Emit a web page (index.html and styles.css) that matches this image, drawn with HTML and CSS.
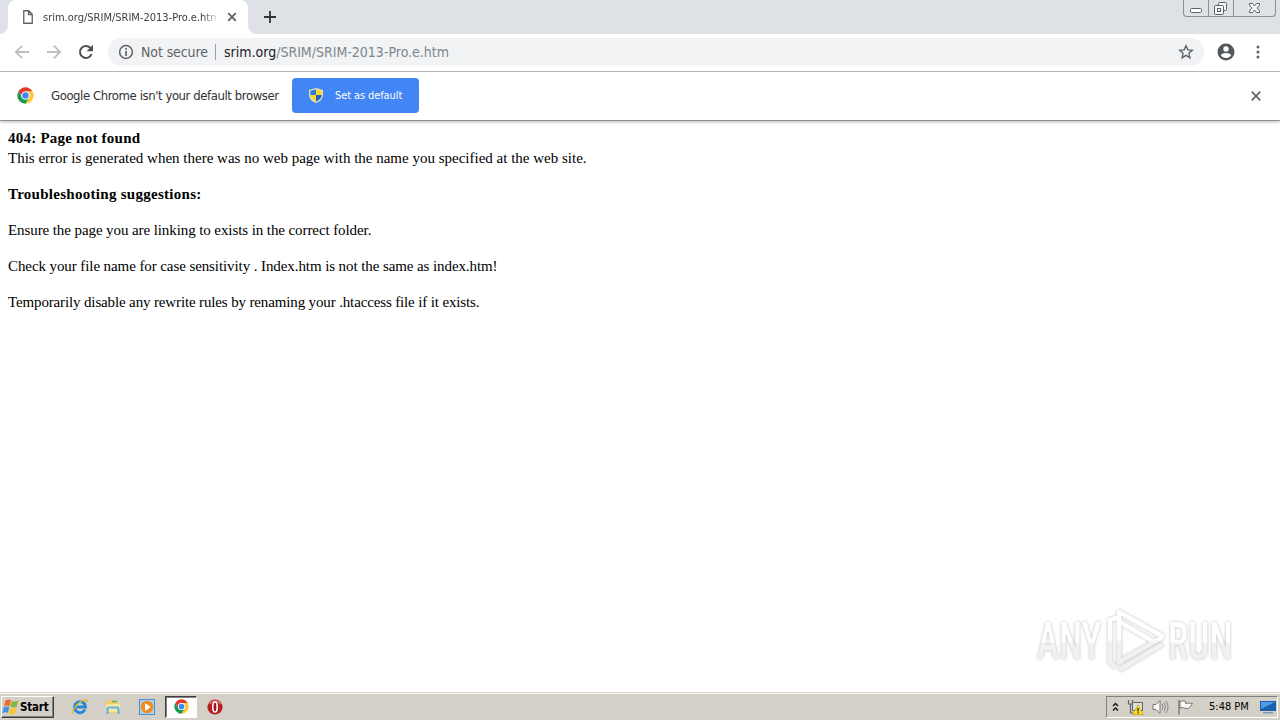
FILE: index.html
```
<!DOCTYPE html>
<html lang="en">
<head>
    <meta charset="UTF-8">
    <meta name="viewport" content="width=device-width, initial-scale=1.0">
    <title>srim.org/SRIM/SRIM-2013-Pro.e.htm</title>
    <link rel="stylesheet" href="styles.css">
</head>
<body>

    <!-- Shared Chrome logo -->
    <svg width="0" height="0" class="defs">
        <symbol id="chrome-logo" viewBox="0 0 48 48">
            <circle cx="24" cy="24" r="23" fill="#fff"/>
            <path d="M4.1 12.5A23 23 0 0 1 43.9 12.5H24A11.5 11.5 0 0 0 14 29.7z" fill="#e33b2e"/>
            <path d="M43.9 12.5A23 23 0 0 1 24 47L34 29.7A11.5 11.5 0 0 0 24 12.5z" fill="#fcc934"/>
            <path d="M24 47A23 23 0 0 1 4.1 12.5L14 29.7A11.5 11.5 0 0 0 34 29.7z" fill="#149a50"/>
            <circle cx="24" cy="24" r="11.5" fill="#fff"/>
            <circle cx="24" cy="24" r="9" fill="#4285f4"/>
        </symbol>
    </svg>

    <div class="screen">
        <!-- Tab strip -->
        <div class="tab-strip">
            <div class="tab">
                <svg class="page-icon" width="10" height="14" viewBox="0 0 10 14"><path d="M.75.75h5l3.5 3.5v9H.75zM5.5.75V4.5h3.75" fill="none" stroke="#5f6368" stroke-width="1.3"/></svg>
                <span class="tab-title">srim.org/SRIM/SRIM-2013-Pro.e.htm</span>
                <svg class="tab-close" width="10" height="10" viewBox="0 0 10 10"><path d="M1.2 1.2l7.6 7.6M8.8 1.2L1.2 8.8" stroke="#5f6368" stroke-width="1.8"/></svg>
            </div>
            <svg class="new-tab" width="12" height="12" viewBox="0 0 12 12"><path d="M6 0v12M0 6h12" stroke="#30343a" stroke-width="1.8"/></svg>
            <div class="window-controls">
                <div class="control">
                    <svg width="24" height="16" viewBox="0 0 24 16"><rect x="6.5" y="8.5" width="11" height="4" rx="1" fill="#fff" stroke="#5c626c"/></svg>
                </div>
                <div class="control">
                    <svg width="24" height="16" viewBox="0 0 24 16"><g fill="#f4f5f7" stroke="#5c626c"><rect x="9.5" y="2.5" width="8" height="8" rx="1"/><rect x="5.5" y="5.5" width="9" height="9" rx="1"/><rect x="8.5" y="8.5" width="3" height="3"/></g></svg>
                </div>
                <div class="control">
                    <svg width="41" height="16" viewBox="0 0 41 16"><path d="M15.5 3.5h3l2 2.5 2-2.5h3v1.5l-2.6 3 2.6 3v1.5h-3l-2-2.5-2 2.5h-3V11l2.6-3-2.6-3z" fill="#fff" stroke="#5c626c"/></svg>
                </div>
            </div>
        </div>

        <!-- Toolbar -->
        <div class="toolbar">
            <div class="nav-buttons">
                <svg width="16" height="16" viewBox="0 0 16 16"><path d="M15 8H2M8.2 1.6L1.8 8l6.4 6.4" fill="none" stroke="#bdc0c3" stroke-width="1.8"/></svg>
                <svg width="16" height="16" viewBox="0 0 16 16"><path d="M1 8h13M7.8 1.6L14.2 8l-6.4 6.4" fill="none" stroke="#bdc0c3" stroke-width="1.8"/></svg>
                <svg width="16" height="16" viewBox="0 0 16 16"><path d="M13.6 10A6 6 0 1 1 12.3 3.8l1.2 1.2" fill="none" stroke="#4d5156" stroke-width="2"/><path d="M15 .8v6.4H8.6z" fill="#4d5156"/></svg>
            </div>
            <div class="omnibox">
                <svg width="16" height="16" viewBox="0 0 16 16"><circle cx="8" cy="8" r="6.4" fill="none" stroke="#5f6368" stroke-width="1.5"/><path d="M7.2 4h1.7v1.7H7.2zM7.2 7h1.7v5H7.2z" fill="#5f6368"/></svg>
                <span class="security">Not secure</span>
                <span class="divider"></span>
                <span class="url"><b>srim.org</b>/SRIM/SRIM-2013-Pro.e.htm</span>
                <svg class="star" width="16" height="16" viewBox="0 0 16 16"><path d="M8 1.7l1.8 4.2 4.5.4-3.4 3 1 4.4L8 11.4l-3.9 2.3 1-4.4-3.4-3 4.5-.4z" fill="none" stroke="#5f6368" stroke-width="1.4"/></svg>
            </div>
            <svg class="profile" width="18" height="18" viewBox="0 0 18 18"><circle cx="9" cy="9" r="8.5" fill="#54585d"/><circle cx="9" cy="6" r="2.7" fill="#fff"/><path d="M3.8 12.3c.9-1.7 3-2.4 5.2-2.4s4.3.7 5.2 2.4C13 14 11.2 15 9 15s-4-1-5.2-2.7z" fill="#fff"/></svg>
            <svg class="menu" width="4" height="14" viewBox="0 0 4 14"><g fill="#5f6368"><circle cx="2" cy="2" r="1.5"/><circle cx="2" cy="7" r="1.5"/><circle cx="2" cy="12" r="1.5"/></g></svg>
        </div>

        <!-- Default browser bar -->
        <div class="infobar">
            <svg width="17" height="17"><use href="#chrome-logo"/></svg>
            <span class="infobar-text">Google Chrome isn't your default browser</span>
            <button class="default-button">
                <svg width="14" height="15" viewBox="0 0 14 15"><path d="M7 0L0 2v5q0 5 7 8 7-3 7-8V2z" fill="#e6e2c5"/><path d="M7 1.3L1.3 2.9V7H7z" fill="#2e7bd1"/><path d="M7 1.3l5.7 1.6V7H7z" fill="#ffd52e"/><path d="M1.3 7H7v6.7Q1.4 11 1.3 7z" fill="#ffd52e"/><path d="M12.7 7H7v6.7q5.6-2.7 5.7-6.7z" fill="#2168bd"/></svg>
                <span>Set as default</span>
            </button>
            <svg class="infobar-close" width="10" height="10" viewBox="0 0 10 10"><path d="M.7.7l8.6 8.6M9.3.7L.7 9.3" stroke="#5f6368" stroke-width="1.7"/></svg>
        </div>

        <!-- Page -->
        <div class="page">
            <h1>404: Page not found</h1>
            <p class="lead">This error is generated when there was no web page with the name you specified at the web site.</p>
            <p class="subtitle">Troubleshooting suggestions:</p>
            <p>Ensure the page you are linking to exists in the correct folder.</p>
            <p>Check your file name for case sensitivity . Index.htm is not the same as index.htm!</p>
            <p class="last">Temporarily disable any rewrite rules by renaming your .htaccess file if it exists.</p>
        </div>

        <!-- Taskbar -->
        <div class="taskbar">
            <div class="start">
                <svg width="18" height="17" viewBox="1.5 0 14 15"><path d="M3.5 2.5q2.5-2 5-.5L7.3 7.2q-2.5-1.4-5 .3z" fill="#ef6a2d"/><path d="M9.3 2.4q2.6 1.6 5.7-.2l-1.5 5.2q-2.8 1.7-5.4.2z" fill="#7dbb3b"/><path d="M2 8.4q2.6-1.7 5-.3l-1.3 5q-2.4-1.4-5 .3z" fill="#3d94df"/><path d="M7.9 8.5q2.6 1.5 5.4-.1L12 13.6q-2.9 1.6-5.5 0z" fill="#fcc631"/></svg>
                <span>Start</span>
            </div>
            <div class="launcher">
                <svg width="18" height="18" viewBox="0 0 18 18"><path d="M14 11.5A5.5 5.5 0 1 1 14.5 9H5" fill="none" stroke="#2188d8" stroke-width="2.9"/><path d="M2.2 15.9C-.5 14.5 4.5 7 9.5 3.8c4-2.7 7.2-3 6.5.5" fill="none" stroke="#e7b936" stroke-width="1.4"/></svg>
            </div>
            <div class="launcher explorer">
                <svg width="18" height="18" viewBox="0 0 18 18"><path d="M2 3l5-1 2 2h6v11H2z" fill="#efcd67"/><path d="M2 6h14v8H2z" fill="#f8e69b"/><path d="M3.5 16v-5q0-1.5 1.5-1.5h8q1.500 0 1.500 1.500v5" fill="none" stroke="#60b6e4" stroke-width="2.2"/><path d="M8 3.5h5" stroke="#5cae58" stroke-width="1.5"/></svg>
            </div>
            <div class="launcher">
                <svg width="18" height="18" viewBox="0 0 18 18"><rect x="1.5" y="1.5" width="15" height="15" fill="#acd0ef" stroke="#4d8fc6"/><circle cx="9" cy="9" r="6.2" fill="#f18a1b"/><path d="M7 5l6 4-6 4z" fill="#fff"/></svg>
            </div>
            <div class="launcher active">
                <svg width="15" height="15"><use href="#chrome-logo"/></svg>
            </div>
            <div class="launcher">
                <svg width="18" height="18" viewBox="0 0 18 18"><circle cx="9" cy="9" r="7.6" fill="#b51f22"/><path d="M3 6q6-6 12 0" fill="none" stroke="#e57672" stroke-width="1.5"/><ellipse cx="9" cy="9" rx="2.2" ry="5" fill="#a11518" stroke="#fff" stroke-width="1.6"/></svg>
            </div>
            <div class="tray">
                <svg width="7" height="10" viewBox="0 0 7 10"><path d="M1 4l2.5-2.5L6 4M1 8.500L3.500 6 6 8.500" fill="none" stroke="#111" stroke-width="1.4"/></svg>
                <svg width="17" height="16" viewBox="0 0 17 16"><path d="M1.5 1v4h4V1M3.5 5v9h3" fill="none" stroke="#666" stroke-width="1.2"/><rect x="5.5" y="3.5" width="10" height="8" fill="#ddd" stroke="#666"/><path d="M11 6l5.3 9.5H5.7z" fill="#ffdf22" stroke="#c9a400" stroke-width=".7"/><path d="M11 9v3.5M11 13.3v1.3" stroke="#222" stroke-width="1.3"/></svg>
                <svg width="17" height="16" viewBox="0 0 17 16"><path d="M1 5.5h3l4-4v13l-4-4H1z" fill="#f8f8f8" stroke="#777"/><path d="M10 5q2 3 0 6M12 3.5q3 4.5 0 9M14 2q4 6 0 12" fill="none" stroke="#8a8a8a"/></svg>
                <svg width="17" height="16" viewBox="0 0 17 16"><path d="M2 1v14.5" stroke="#777" stroke-width="1.4"/><path d="M3 2.500q3-1.500 5.500 0v2q3-1 7 0-1.500 2.500-4 5-2 .5-4-.5-2-1-4.500 0z" fill="#f8f8f8" stroke="#777"/></svg>
                <span class="clock">5:48 PM</span>
                <svg width="16" height="14" viewBox="0 0 16 14"><path d="M0 1h16v10H0z" fill="#1c5fad"/><path d="M1 2h14L1 9z" fill="#4f9ce4"/><path d="M3 12h10v1.5H3z" fill="#7c98b5"/></svg>
            </div>
        </div>

        <!-- Watermark -->
        <div class="watermark">
            <span class="word any">ANY</span>
            <svg width="60" height="66" viewBox="0 0 60 66">
                <defs>
                    <linearGradient id="fade" gradientUnits="userSpaceOnUse" x1="0" y1="0" x2="0" y2="66">
                        <stop offset=".48" stop-color="#fff"/>
                        <stop offset=".52" stop-color="#f1f1f1"/>
                    </linearGradient>
                </defs>
                <path d="M10 10L4 12V54L8 58M15 61L55 37M13 54V4L56 28M14 14L48 34M13 54L55 30" fill="none" stroke="url(#fade)" stroke-width="4.5" stroke-linejoin="round" stroke-linecap="round"/>
            </svg>
            <span class="word run">RUN</span>
        </div>
    </div>

</body>
</html>
```
FILE: styles.css
```
body {
    margin: 0;
    background-color: #fff;
    font-family: "DejaVu Sans Condensed", "DejaVu Sans", sans-serif;
    font-stretch: condensed;
    overflow: hidden;
}
svg {
    display: block;
    flex-shrink: 0;
}
.defs {
    position: absolute;
}
.screen {
    position: relative;
    display: flex;
    flex-direction: column;
    width: 1280px;
    height: 720px;
}
.tab-strip {
    display: flex;
    height: 34px;
    background-color: #dee1e6;
}
.tab {
    position: relative;
    display: flex;
    align-items: center;
    box-sizing: border-box;
    width: 240px;
    height: 34px;
    margin-left: 8px;
    padding: 0 11px 0 15px;
    background-color: #fff;
    border-radius: 8px 8px 0 0;
}
/* flared bottom corners */
.tab::before, .tab::after {
    content: "";
    position: absolute;
    bottom: 0;
    width: 8px;
    height: 8px;
}
.tab::before {
    left: -8px;
    background: radial-gradient(circle at 0 0, #dee1e6 7.5px, #fff 8px);
}
.tab::after {
    right: -8px;
    background: radial-gradient(circle at 100% 0, #dee1e6 7.5px, #fff 8px);
}
.tab-title {
    width: 174px;
    margin-left: 10px;
    overflow: hidden;
    white-space: nowrap;
    font-size: 11px;
    color: #3c4043;
    -webkit-mask-image: linear-gradient(to right, #000 160px, transparent 176px);
}
.tab-close {
    margin-left: auto;
}
.new-tab {
    margin: 11px 0 0 16px;
}
.window-controls {
    display: flex;
    box-sizing: border-box;
    height: 17px;
    margin-left: auto;
    margin-right: 4px;
    border: 1px solid #8a8f98;
    border-top: none;
    border-radius: 0 0 4px 4px;
}
.control + .control {
    border-left: 1px solid #8a8f98;
}
.control {
    height: 16px;
    overflow: hidden;
}
.toolbar {
    display: flex;
    align-items: center;
    box-sizing: border-box;
    height: 38px;
    padding-left: 14px;
    padding-bottom: 1px;
    border-bottom: 1px solid #b4b6ba;
}
.nav-buttons {
    display: flex;
    gap: 16px;
}
.omnibox {
    display: flex;
    align-items: center;
    box-sizing: border-box;
    width: 1096px;
    height: 28px;
    margin-left: 14px;
    padding: 0 10px;
    border-radius: 14px;
    background-color: #f1f3f4;
    font-size: 14px;
    white-space: nowrap;
    color: #5f6368;
}
.security {
    width: 67px;
    margin-left: 7px;
    letter-spacing: -0.1px;
}
.divider {
    width: 1px;
    height: 16px;
    margin: 0 8px 0 7px;
    background-color: #9aa0a6;
}
.url {
    color: #80868b;
}
.url b {
    font-weight: normal;
    color: #202124;
}
.star {
    margin-left: auto;
}
.profile {
    margin-left: 13px;
}
.menu {
    margin-left: 21px;
}
.infobar {
    display: flex;
    align-items: center;
    box-sizing: border-box;
    height: 49px;
    padding: 0 19px 1px 17px;
    border-bottom: 1px solid #8f8f8f;
    box-shadow: 0 1px 3px #bbb;
}
.infobar-text {
    width: 229px;
    margin-left: 17px;
    font-size: 13px;
    letter-spacing: -0.42px;
    color: #303236;
    white-space: nowrap;
}
.default-button {
    display: flex;
    align-items: center;
    gap: 12px;
    width: 127px;
    height: 35px;
    margin-left: 12px;
    padding: 0 17px;
    border: none;
    border-radius: 4px;
    background-color: #4285f4;
    font-family: inherit;
    font-stretch: inherit;
    font-size: 11px;
    letter-spacing: -0.1px;
    white-space: nowrap;
    color: #fff;
}
.infobar-close {
    margin-left: auto;
}
.page {
    flex: 1;
    padding: 8px;
    font-family: "Liberation Serif", serif;
    font-size: 15px;
    line-height: 18px;
    color: #000;
}
.page h1 {
    margin: 0;
    font-size: 15px;
    line-height: 18px;
    letter-spacing: 0.23px;
}
.page p {
    margin: 18px 0;
    letter-spacing: -0.09px;
}
.page .lead {
    margin-top: 2px;
    letter-spacing: 0;
}
.page .subtitle {
    font-weight: bold;
    letter-spacing: 0.28px;
}
.page .last {
    letter-spacing: -0.14px;
}
.taskbar {
    display: flex;
    align-items: center;
    box-sizing: border-box;
    height: 28px;
    padding: 0 2px 0 1px;
    border-top: 1px solid #d4d0c8;
    box-shadow: inset 0 1px 0 #fff;
    background-color: #d4d0c8;
}
.start {
    display: flex;
    align-items: center;
    box-sizing: border-box;
    width: 53px;
    height: 22px;
    margin-right: 10px;
    padding-left: 0;
    border: 1px solid;
    border-color: #fff #404040 #404040 #fff;
    box-shadow: inset -1px -1px 0 #808080;
    font-size: 11.5px;
    font-weight: bold;
    letter-spacing: -0.2px;
    color: #000;
}
.launcher {
    display: flex;
    align-items: center;
    justify-content: center;
    box-sizing: border-box;
    width: 32px;
    height: 22px;
    margin-right: 1.7px;
}
.explorer {
    padding-right: 1px;
}
.launcher.active {
    border: 1px solid;
    border-color: #404040 #fff #fff #404040;
    box-shadow: inset 1px 1px 0 #808080;
    background-color: #fff;
}
.tray {
    display: flex;
    align-items: center;
    gap: 8px;
    box-sizing: border-box;
    width: 172px;
    height: 22px;
    margin-left: auto;
    padding-left: 5px;
    border: 1px solid;
    border-color: #808080 #fff #fff #808080;
    font-size: 11px;
    color: #000;
}
.clock {
    width: 40px;
    margin: 0 3px 0 7px;
    white-space: nowrap;
}
/* sits over the page */
.watermark {
    position: absolute;
    right: 47px;
    bottom: 46px;
    display: flex;
    align-items: center;
    filter: drop-shadow(0 0 1.5px #bbb);
}
.word {
    width: 64px;
    font-family: "Roboto", sans-serif;
    font-size: 52px;
    font-weight: 500;
    color: #f7f7f7;
    transform: scaleX(0.72);
    transform-origin: left;
}
.any, .run {
    width: max-content;
    margin-right: -25px;
    background: linear-gradient(#fff 50%, #f1f1f1 54%);
    -webkit-background-clip: text;
    background-clip: text;
    color: transparent;
}
.watermark svg {
    margin: 0 2px 0 5px;
}
```
